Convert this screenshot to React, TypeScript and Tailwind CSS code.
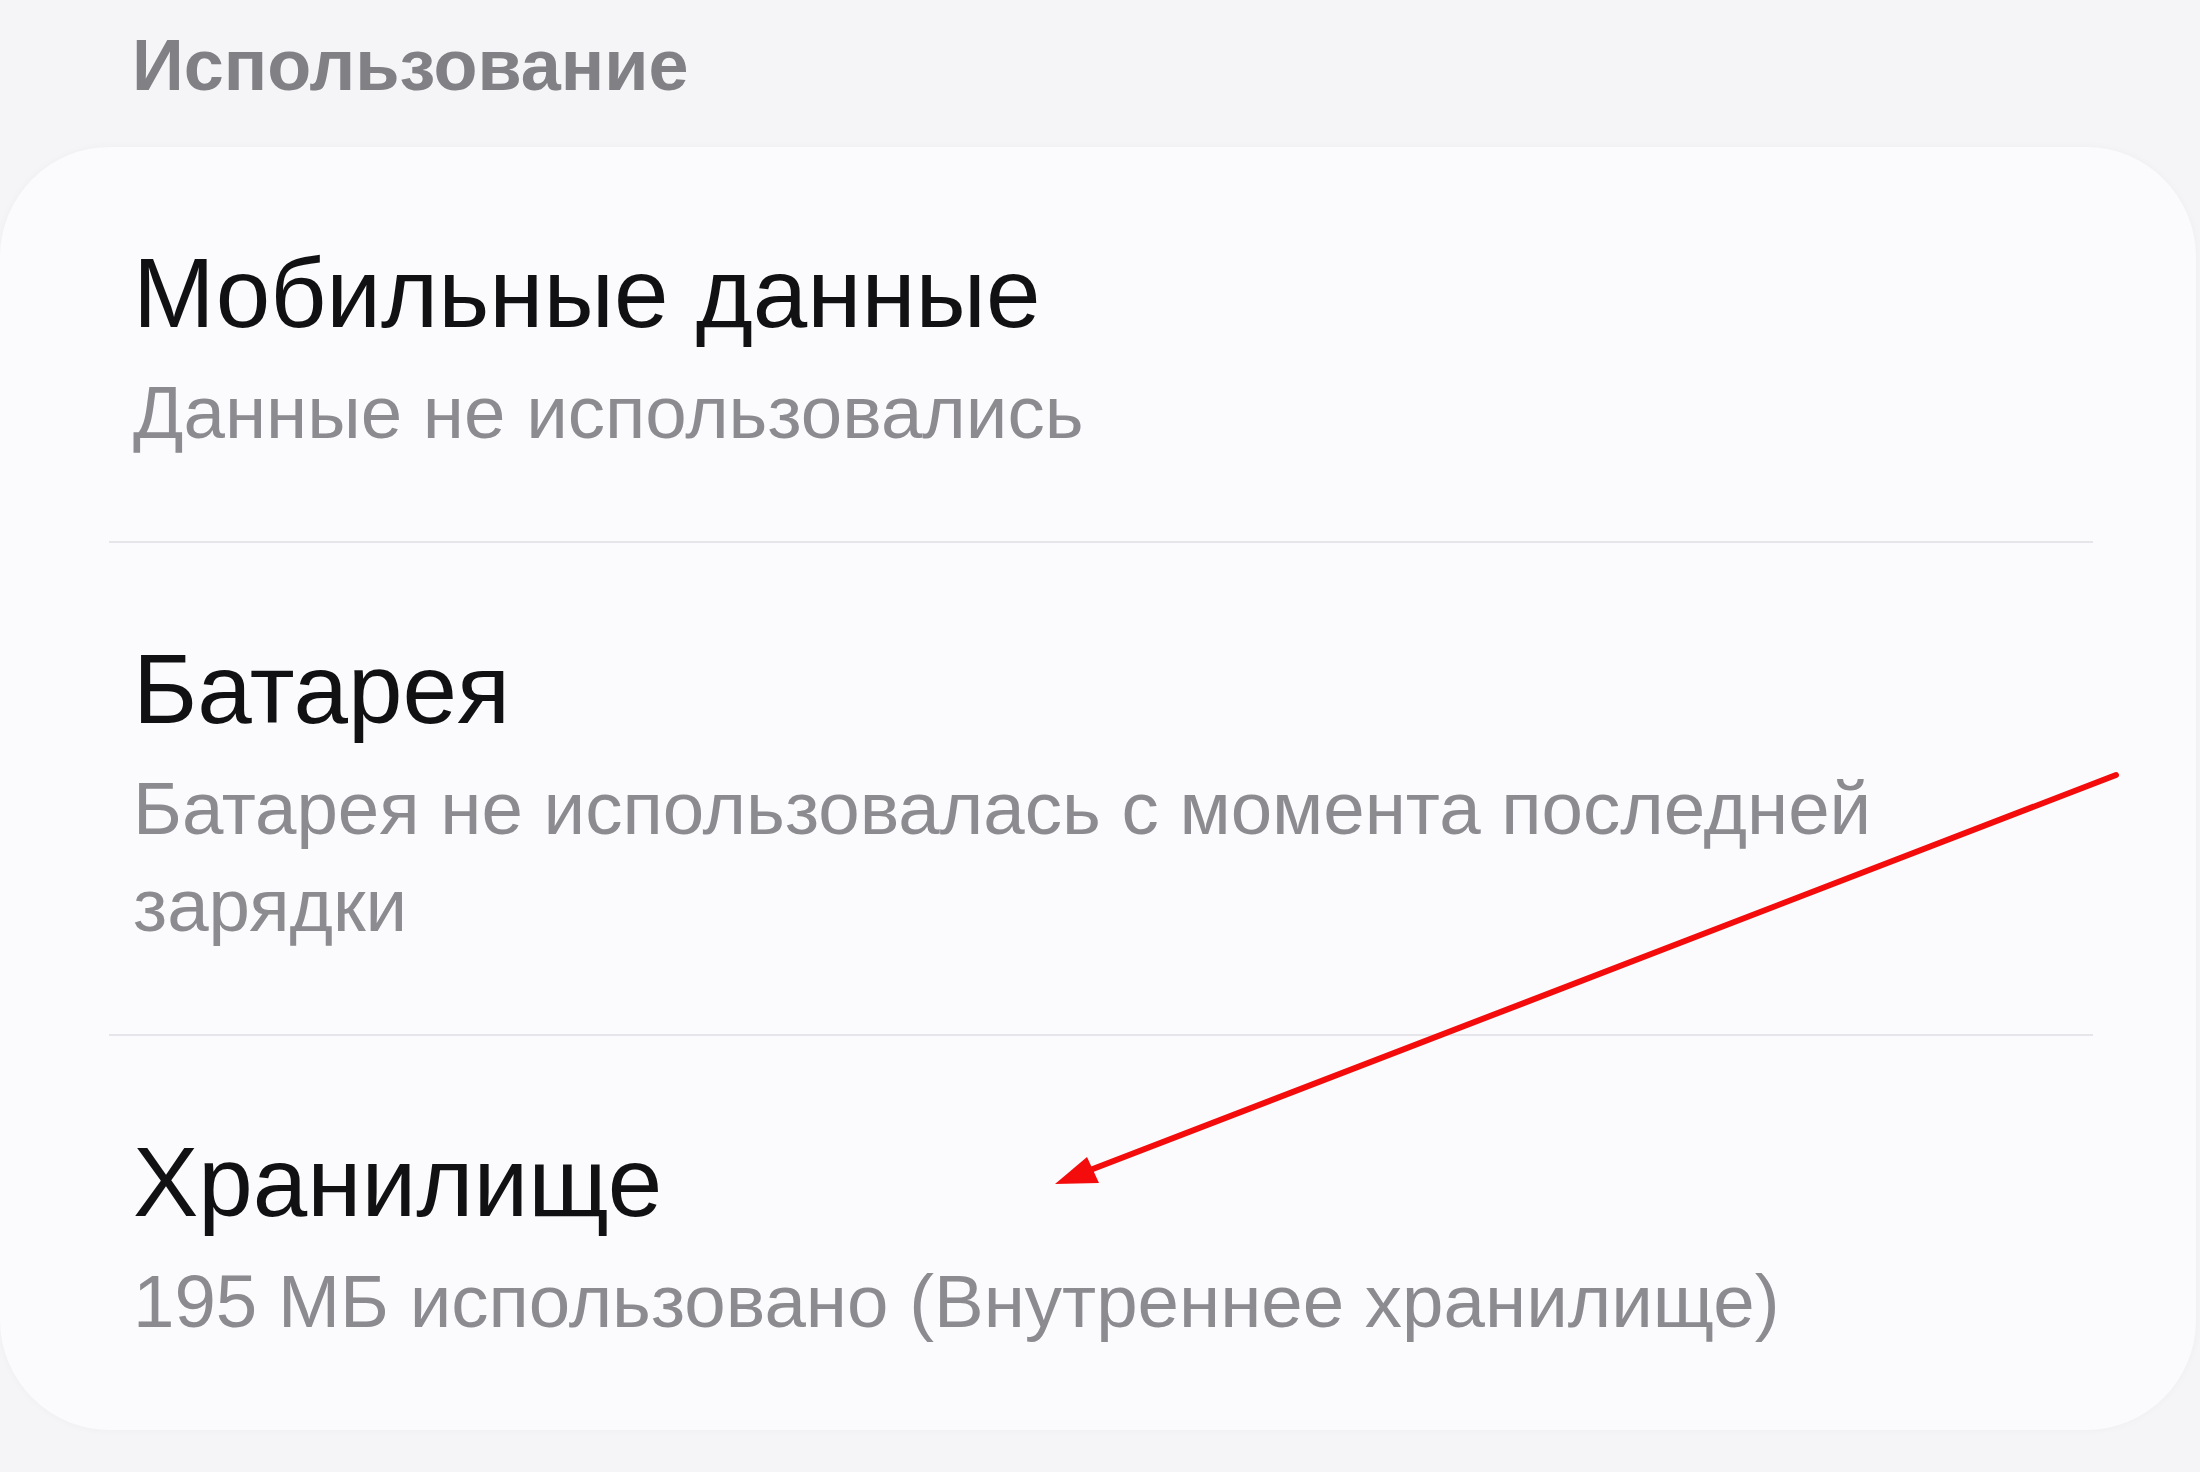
import React from 'react';

interface UsageItem {
  title: string;
  subtitle: string;
}

const items: UsageItem[] = [
  { title: 'Мобильные данные', subtitle: 'Данные не использовались' },
  { title: 'Батарея', subtitle: 'Батарея не использовалась с момента последней зарядки' },
  { title: 'Хранилище', subtitle: '195 МБ использовано (Внутреннее хранилище)' },
];

const UsageRow: React.FC<{ item: UsageItem; last: boolean }> = ({ item, last }) => (
  <>
    <div className="pl-[133px] pt-[86px] pb-[80px]">
      <div className="text-[98px] leading-[120px] text-[#111113]">{item.title}</div>
      <div className="mt-[11px] w-[1900px] text-[74.5px] leading-[97px] text-[#8b8b90]">
        {item.subtitle}
      </div>
    </div>
    {!last && <div className="ml-[109px] mr-[103px] h-[2px] bg-[#e6e6ea]" />}
  </>
);

// red annotation arrow drawn over the screenshot
const Arrow: React.FC = () => (
  <svg
    className="absolute left-0 top-0 pointer-events-none"
    width="2200"
    height="1472"
    viewBox="0 0 2200 1472"
  >
    <line x1="2116" y1="775" x2="1085" y2="1172" stroke="#f40c0c" strokeWidth="6" strokeLinecap="round" />
    <polygon points="1055,1184 1087,1157 1099,1183" fill="#f40c0c" />
  </svg>
);

const App: React.FC = () => {
  return (
    <div
      className="relative w-[2200px] h-[1472px] overflow-hidden bg-[#f5f5f7]"
      style={{ fontFamily: '"Liberation Sans", Arial, sans-serif' }}
    >
      {/* Section header */}
      <div className="pl-[132px] pt-[15px] text-[72px] leading-[100px] font-bold text-[#808085]">
        Использование
      </div>

      {/* Card */}
      <div className="mt-[32px] w-[2196px] rounded-[110px] bg-[#fbfbfd] shadow-[0_0_8px_rgba(0,0,0,0.03)]">
        {items.map((item, i) => (
          <UsageRow key={item.title} item={item} last={i === items.length - 1} />
        ))}
      </div>

      <Arrow />
    </div>
  );
};

export default App;
